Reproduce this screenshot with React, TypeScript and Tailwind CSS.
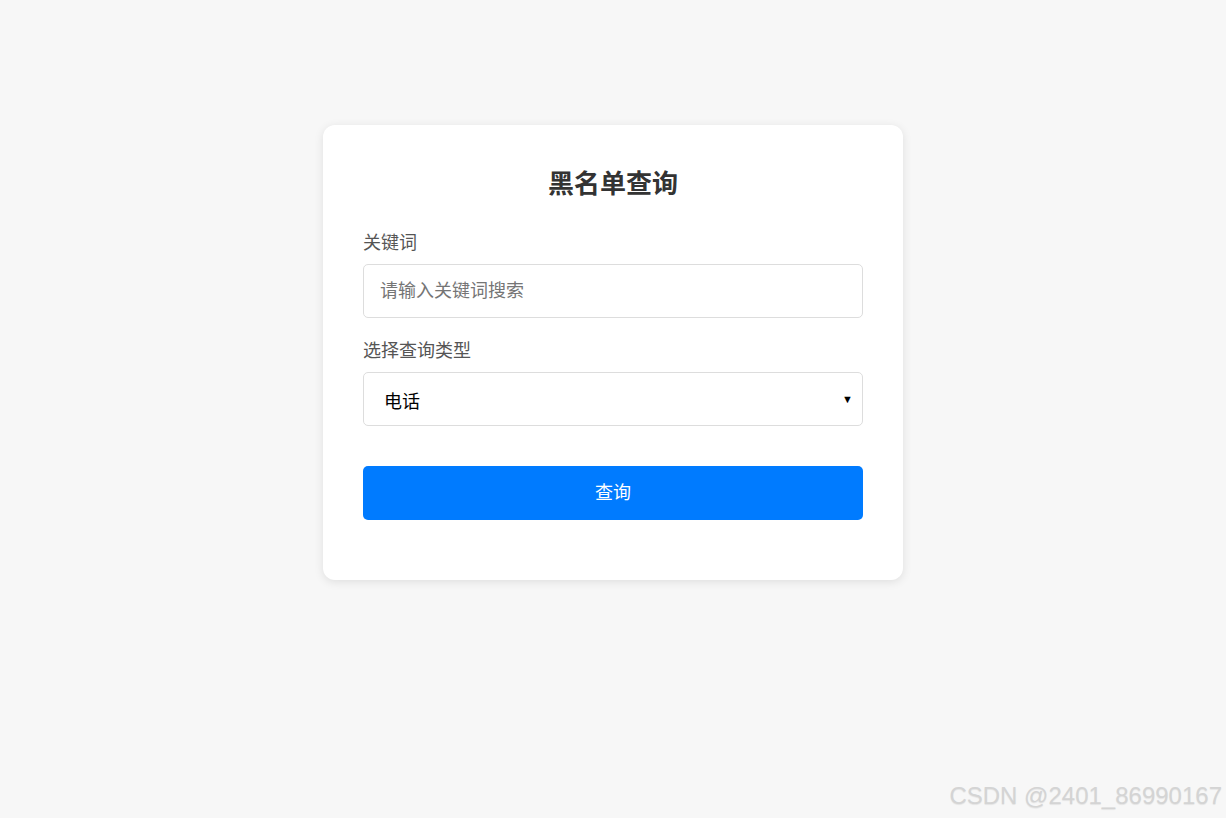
import { useState } from 'react';

export default function App() {
  const [keyword, setKeyword] = useState('');
  const [type, setType] = useState('phone');

  return (
    <div className="relative min-h-screen w-full bg-[#f7f7f7] font-['Liberation_Sans','Noto_Sans_CJK_SC',sans-serif]">
      <div className="flex justify-center pt-[125px]">
        {/* Card */}
        <div className="w-[580px] rounded-[12px] bg-white px-[40px] pt-[40px] pb-[60px] shadow-[0_2px_10px_rgba(0,0,0,0.1)]">
          <div className="mb-[28px] flex h-[38px] items-center justify-center">
            <h2 className="text-[26px] font-bold leading-none text-[#333]">黑名单查询</h2>
          </div>

          <label className="mb-[9px] block h-[24px] text-[18px] leading-[24px] text-[#555]">关键词</label>
          <input
            value={keyword}
            onChange={(e) => setKeyword(e.target.value)}
            placeholder="请输入关键词搜索"
            className="box-border block h-[54px] w-full rounded-[5px] border border-[#ddd] px-[16px] text-[18px] text-[#333] outline-none placeholder:text-[#757575]"
          />

          <label className="mt-[21px] mb-[9px] block h-[24px] text-[18px] leading-[24px] text-[#555]">选择查询类型</label>
          <div className="relative">
            <select
              value={type}
              onChange={(e) => setType(e.target.value)}
              className="box-border block h-[54px] w-full appearance-none rounded-[5px] border border-[#ddd] bg-white pl-[20px] pr-[30px] pt-[6px] text-[18px] text-black outline-none"
            >
              <option value="phone">电话</option>
              <option value="name">姓名</option>
              <option value="id">身份证</option>
            </select>
            <span className="pointer-events-none absolute right-[10px] top-1/2 -translate-y-1/2 text-[11px] leading-none text-black">▼</span>
          </div>

          <button className="mt-[40px] block h-[54px] w-full rounded-[5px] bg-[#007bff] text-[18px] text-white">
            查询
          </button>
        </div>
      </div>

      {/* Watermark */}
      <span className="absolute bottom-[4px] right-[4px] text-[24px] text-[#d4d4d4] [text-shadow:0_1px_1px_rgba(0,0,0,0.08)]">
        CSDN @2401_86990167
      </span>
    </div>
  );
}
